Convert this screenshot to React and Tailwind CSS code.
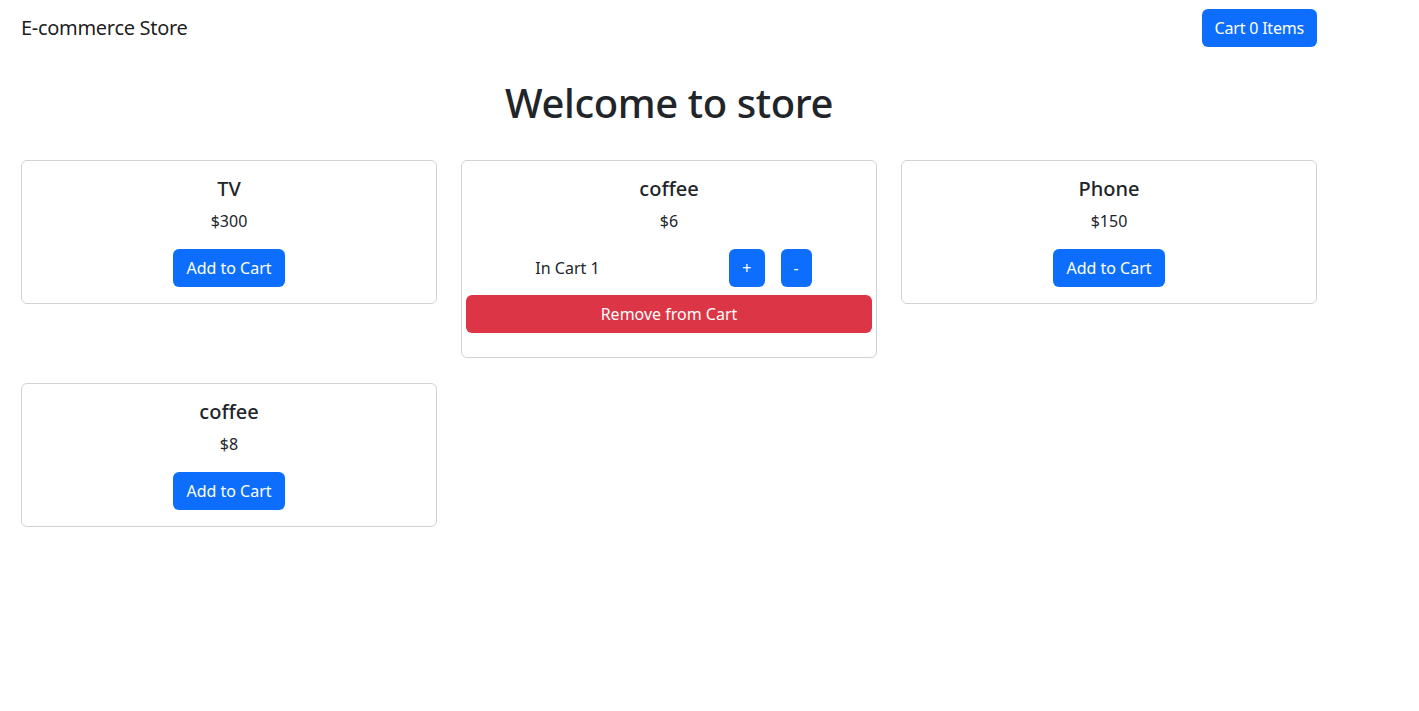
import { useState } from 'react'

const products = [
  { id: 1, name: 'TV', price: 300 },
  { id: 2, name: 'coffee', price: 6 },
  { id: 3, name: 'Phone', price: 150 },
  { id: 4, name: 'coffee', price: 8 },
]

function ProductCard({ product, qty, onAdd, onRemove, onClear }) {
  return (
    <div className="border border-black/[0.175] rounded-md p-4 text-center">
      <h5 className="text-[20px] font-medium leading-[24px] mb-2">{product.name}</h5>
      <p className="leading-6 mb-4">${product.price}</p>
      {qty > 0 ? (
        <>
          <div className="-mx-3 flex">
            <div className="w-1/2 px-3 flex items-center justify-center">In Cart {qty}</div>
            <div className="w-1/2 px-3 flex items-center justify-center gap-4">
              <button onClick={onAdd} className="bg-[#0d6efd] text-white px-3 py-[6px] leading-6 rounded-md border border-transparent">+</button>
              <button onClick={onRemove} className="bg-[#0d6efd] text-white px-3 py-[6px] leading-6 rounded-md border border-transparent">-</button>
            </div>
          </div>
          <div className="-mx-3 mt-2 mb-2">
            <button onClick={onClear} className="w-full bg-[#dc3545] text-white px-3 py-[6px] leading-6 rounded-md border border-transparent">
              Remove from Cart
            </button>
          </div>
        </>
      ) : (
        <button onClick={onAdd} className="bg-[#0d6efd] text-white px-3 py-[6px] leading-6 rounded-md border border-transparent">
          Add to Cart
        </button>
      )}
    </div>
  )
}

export default function App() {
  const [cart, setCart] = useState({ 2: 1 })

  const add = (id) => setCart(c => ({ ...c, [id]: (c[id] || 0) + 1 }))
  const remove = (id) => setCart(c => ({ ...c, [id]: Math.max(0, (c[id] || 0) - 1) }))
  const clear = (id) => setCart(c => ({ ...c, [id]: 0 }))

  return (
    <div className="min-h-screen bg-white text-[#212529] text-base" style={{ fontFamily: '"Noto Sans", sans-serif' }}>
      <div className="w-[1296px] ml-[21px]">
        {/* Navbar */}
        <nav className="flex items-center justify-between py-2">
          <span className="text-[20px] leading-[30px] py-[5px] text-black/90 tracking-[-0.3px]">E-commerce Store</span>
          <button className="bg-[#0d6efd] text-white px-3 py-[6px] leading-6 rounded-md border border-transparent tracking-[-0.2px]">
            Cart 0 Items
          </button>
        </nav>

        <h1 className="text-[40px] font-medium leading-[48px] text-center mt-[23px] mb-[33px] tracking-[-0.4px]">Welcome to store</h1>

        {/* Products */}
        <div className="grid grid-cols-3 gap-x-6 gap-y-[25px] items-start">
          {products.map(p => (
            <ProductCard
              key={p.id}
              product={p}
              qty={cart[p.id] || 0}
              onAdd={() => add(p.id)}
              onRemove={() => remove(p.id)}
              onClear={() => clear(p.id)}
            />
          ))}
        </div>
      </div>
    </div>
  )
}
